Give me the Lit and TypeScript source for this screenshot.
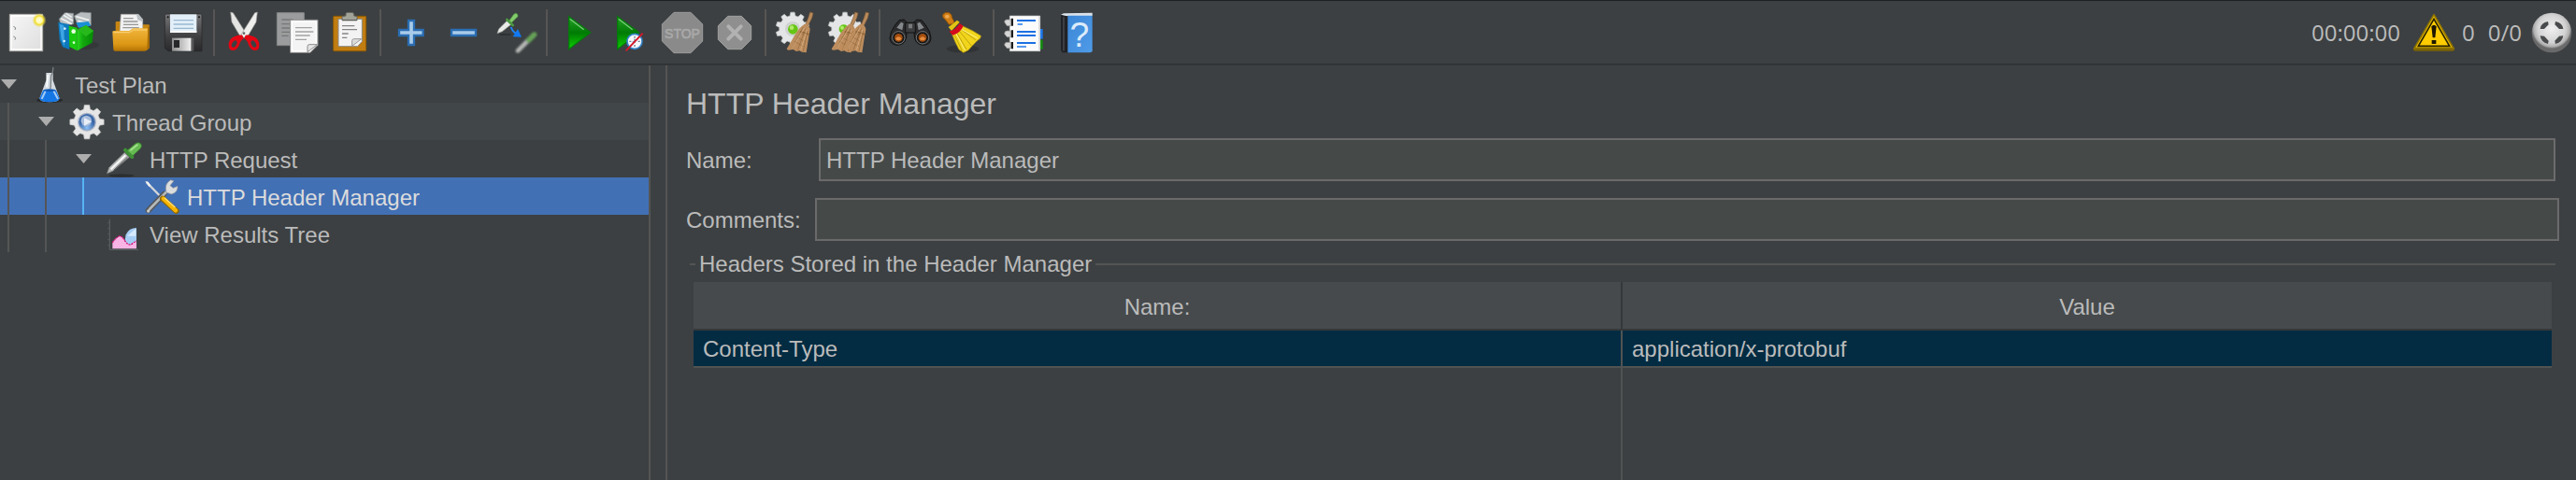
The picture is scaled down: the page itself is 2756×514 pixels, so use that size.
import { LitElement, html, svg, css, nothing, TemplateResult } from "lit";
import { customElement, property, state } from "lit/decorators.js";
import { classMap } from "lit/directives/class-map.js";

interface Icon {
  box: string;
  art: TemplateResult;
}

const gearPath = (cx: number, cy: number, outer: number, inner: number, teeth: number): string => {
  const points: string[] = [];
  const step = (Math.PI * 2) / teeth;
  for (let i = 0; i < teeth; i++) {
    const mid = i * step - Math.PI / 2;
    const at = (r: number, a: number) => `${(cx + r * Math.cos(a)).toFixed(1)},${(cy + r * Math.sin(a)).toFixed(1)}`;
    points.push(at(inner, mid - step * 0.32), at(outer, mid - step * 0.19), at(outer, mid + step * 0.19), at(inner, mid + step * 0.32));
  }
  return `M${points.join("L")}Z`;
};

const broom = (dx: number) => svg`
  <g transform="translate(${dx} 0)">
    <path d="M200 36l10 3-4 16-14 28-8-4 10-24z" fill="#b98a5c" stroke="#7d5a38" stroke-width="2"/>
    <path d="M182 74c10 0 18 8 18 18l-4 22-8 52-14-2-8-4-10 2-10-6-16 2c-4-2-6-4-4-6 16-22 26-50 44-68z" fill="#bd8d5e"/>
    <path d="M178 84l-34 66M186 88l-26 70M192 96l-14 66M166 100l16 12M158 116l24 14M150 130l28 16" stroke="#8f683d" stroke-width="2" fill="none"/>
    <path d="M168 98l30 10" stroke="#8f6538" stroke-width="4"/>
    <path d="M182 86l-38 64M190 92l-20 66" stroke="#dfb689" stroke-width="2" fill="none"/>
  </g>`;

const ICONS: Record<string, Icon> = {
  new: {
    box: "0 18 168 168",
    art: svg`
      <defs><linearGradient id="a" x1="0" y1="0" x2="1" y2="1"><stop offset="0" stop-color="#f7f7f7"/><stop offset="1" stop-color="#dedede"/></linearGradient>
      <radialGradient id="b"><stop offset="0" stop-color="#fffde8"/><stop offset=".45" stop-color="#fff9a0"/><stop offset=".6" stop-color="#f2dc2c"/><stop offset="1" stop-color="#e8d84c" stop-opacity="0"/></radialGradient></defs>
      <path d="M31 43H137V161H31Z" fill="url(#a)" stroke="#b4b4b0" stroke-width="3"/>
      <path d="M36 48H132V156H36Z" fill="none" stroke="#fff" stroke-width="4"/>
      <path d="M43 82l7 4-2 7M43 114l7 4-2 7" stroke="#888" stroke-width="3" fill="none"/>
      <circle cx="126" cy="62" r="23" fill="url(#b)"/>`,
  },
  templates: {
    box: "168 18 168 168",
    art: svg`
      <defs><linearGradient id="a"><stop offset="0" stop-color="#27d61c"/><stop offset=".35" stop-color="#12a80e"/><stop offset="1" stop-color="#058a04"/></linearGradient></defs>
      <ellipse cx="262" cy="142" rx="56" ry="14" fill="#2c2f30" opacity=".5"/>
      <path d="M190 58l18-20 28 2v34l-40 6zM238 48l22-12 32 2v40l-40 6z" fill="#b8bec0" stroke="#7e8688" stroke-width="2"/>
      <path d="M196 56l34 18M204 46l30 18M244 50l42 12M250 64l38 10M212 40l18 12" stroke="#eef0f0" stroke-width="5"/>
      <path d="M187 68l36 8v80l-22-8-10-24z" fill="#0e78bd"/>
      <path d="M191 74l14 4 2 68-10-22z" fill="#3fa5e2"/>
      <path d="M244 70l40-4 8 14-40 6z" fill="#1b8fd6"/>
      <path d="M221 80l27 6v74l-25-12z" fill="#19c90f"/>
      <path d="M248 92l28-14 24 18-4 38-48 26z" fill="url(#a)"/>
      <path d="M248 92l28-14 24 18-24 18z" fill="#27b91c"/>
      <circle cx="236" cy="98" r="7" fill="#e6ffe0"/><circle cx="237" cy="134" r="4" fill="#d6ffd0"/>
      <circle cx="208" cy="89" r="4" fill="#d8f0ff"/><circle cx="206" cy="129" r="4" fill="#d8f0ff"/>`,
  },
  open: {
    box: "336 18 168 168",
    art: svg`
      <defs><linearGradient id="a" x1="0" y1="0" x2="0" y2="1"><stop offset="0" stop-color="#f0b63d"/><stop offset=".7" stop-color="#dc9715"/><stop offset="1" stop-color="#b47404"/></linearGradient></defs>
      <path d="M371 70q0-4 4-4h20l8 10h72q5 0 5 4v70l-8 8H371z" fill="#c88610"/>
      <path d="M388 43h56l14 16v46h-74z" fill="#f1f1f1" stroke="#a9a9a9" stroke-width="2"/>
      <path d="M438 43l6 0 14 16v8l-16-6z" fill="#b9bfc2"/>
      <path d="M396 56h32M396 66h46M396 76h48M394 86h52" stroke="#979797" stroke-width="4"/>
      <path d="M361 100q0-4 4-4h50l12-8h44q4 0 4 4l-2 62q-2 7-8 7H370q-6 0-6-6z" fill="url(#a)"/>
      <path d="M364 101h52l12-8h44" stroke="#fbd57e" stroke-width="3" fill="none"/>
      <path d="M475 82l5 0v66l-8 10z" fill="#a76c05"/>`,
  },
  save: {
    box: "504 18 168 168",
    art: svg`
      <defs><linearGradient id="a" x1="0" y1="0" x2="0" y2="1"><stop offset="0" stop-color="#77777a"/><stop offset=".6" stop-color="#3f3f42"/><stop offset="1" stop-color="#29292b"/></linearGradient>
      <linearGradient id="b"><stop offset="0" stop-color="#8e8e8e"/><stop offset="1" stop-color="#f2f2f2"/></linearGradient></defs>
      <path d="M533 42H644L648 46V161H540L529 152V46Z" fill="url(#a)" stroke="#242426" stroke-width="2"/>
      <path d="M546 43H631V101H546Z" fill="#e3eff8"/>
      <path d="M546 96H631V102H546Z" fill="#fff"/>
      <path d="M557 62H621M557 75H621M557 88H621" stroke="#98b9d2" stroke-width="4"/>
      <path d="M552 119H614V161H552Z" fill="url(#b)"/>
      <path d="M558 126H576V150H558Z" fill="#27272a"/>
      <path d="M614 119H622V161H614Z" fill="#58585a"/>
      <circle cx="539" cy="52" r="3" fill="#111"/><circle cx="639" cy="52" r="3" fill="#111"/>`,
  },
  cut: {
    box: "702 18 168 168",
    art: svg`
      <path d="M740 36l8 2 20 32 24 38-8 10-14-6-26-44z" fill="#e4e4e2" stroke="#9a9a98" stroke-width="2"/>
      <path d="M826 36l-8 2-20 32-24 38 8 10 14-6 26-44z" fill="#efefed" stroke="#9a9a98" stroke-width="2"/>
      <circle cx="783" cy="104" r="4" fill="#666"/>
      <path d="M778 110c-8-2-16 0-24 4-14 4-20 16-20 28 0 12 5 17 12 17 12 0 18-8 22-18 2-8 6-14 14-20z" fill="#e30613"/>
      <path d="M788 110c8-2 16 0 24 4 14 4 20 16 20 28 0 12-5 17-12 17-12 0-18-8-22-18-2-8-6-14-14-20z" fill="#e30613"/>
      <ellipse cx="752" cy="138" rx="7" ry="12" transform="rotate(30 752 138)" fill="#3c4042"/>
      <ellipse cx="814" cy="138" rx="7" ry="12" transform="rotate(-30 814 138)" fill="#3c4042"/>`,
  },
  copy: {
    box: "870 18 168 168",
    art: svg`
      <path d="M889 38H976V143H889Z" fill="#9b9c9d" stroke="#858687" stroke-width="3"/>
      <path d="M904 60H940M904 74H930M904 87H930M904 100H930M904 112H926" stroke="#777" stroke-width="4"/>
      <path d="M932 61H1020V142L996 166H932Z" fill="#f4f4f4" stroke="#8e8e8e" stroke-width="3"/>
      <path d="M937 66H1015V140L992 161H937Z" fill="none" stroke="#fff" stroke-width="4"/>
      <path d="M987 164V146Q987 140 993 140H1018Z" fill="#e5e5e5" stroke="#8b8b8b" stroke-width="3"/>
      <path d="M948 86H1001M948 99H1006M948 111H995M948 124H984" stroke="#a2a2a2" stroke-width="4"/>`,
  },
  paste: {
    box: "1038 18 168 168",
    art: svg`
      <rect x="1070" y="49" width="105" height="112" rx="3" fill="#c17d11" stroke="#8f5902" stroke-width="3"/>
      <path d="M1086 58H1162V130L1148 146H1086Z" fill="#f3f3f3" stroke="#8a8a85" stroke-width="3"/>
      <path d="M1130 145V128Q1130 122 1136 122H1160Z" fill="#dcdcdc" stroke="#999" stroke-width="3"/>
      <path d="M1098 80H1138M1098 92H1146M1098 105H1118M1098 118H1114" stroke="#858585" stroke-width="4"/>
      <path d="M1098 62V50L1110 48V40Q1112 37 1122 37 1134 37 1136 41V48L1146 50V62Z" fill="#a2a399" stroke="#66675f" stroke-width="3"/>
      <path d="M1098 62H1146" stroke="#5c5d56" stroke-width="3"/>`,
  },
  plus: {
    box: "36 18 168 168",
    art: svg`<path d="M111 63H129V93H158V111H129V141H111V111H81V93H111Z" fill="#a9cbe9" stroke="#2a6db3" stroke-width="7"/>`,
  },
  minus: {
    box: "204 18 168 168",
    art: svg`<path d="M249 93H327V111H249Z" fill="#a9cbe9" stroke="#2a6db3" stroke-width="7"/>`,
  },
  toggle: {
    box: "372 18 168 168",
    art: svg`
      <defs><filter id="a" x="-20%" y="-20%" width="140%" height="140%"><feGaussianBlur stdDeviation="2.5"/></filter></defs>
      <path d="M396 104L401 90 429 62 442 74 412 98Z" fill="#e9ebe9" stroke="#9c9f9c" stroke-width="2"/>
      <path d="M404 108H440" stroke="#232526" stroke-width="3"/>
      <path d="M427 60L446 78" stroke="#4d9a41" stroke-width="8" stroke-linecap="round"/>
      <path d="M434 64L448 44Q456 36 461 43 465 50 458 54L442 70Z" fill="#83cc6b" stroke="#468c38" stroke-width="2"/>
      <path d="M440 84q6 16 16 20" stroke="#1f84f5" stroke-width="6" fill="none"/>
      <path d="M446 115l28 1-12-26z" fill="#1279f2"/>
      <g filter="url(#a)"><path d="M462 160L496 126" stroke="#b5b7b5" stroke-width="14" stroke-linecap="round"/>
      <path d="M497 126L515 108" stroke="#66a356" stroke-width="16" stroke-linecap="round"/></g>`,
  },
  start: {
    box: "570 18 168 168",
    art: svg`
      <defs><linearGradient id="a" x1="0" y1="0" x2="0" y2="1"><stop offset="0" stop-color="#26a326"/><stop offset=".5" stop-color="#007a04"/><stop offset="1" stop-color="#0ed400"/></linearGradient></defs>
      <path d="M626 50L695 101 626 155Z" fill="url(#a)" stroke="#047a0a" stroke-width="4"/>
      <path d="M629 58L674 92" stroke="#79c979" stroke-width="4"/>`,
  },
  startNoPause: {
    box: "738 18 168 168",
    art: svg`
      <defs><linearGradient id="a" x1="0" y1="0" x2="0" y2="1"><stop offset="0" stop-color="#26a326"/><stop offset=".5" stop-color="#007a04"/><stop offset="1" stop-color="#0ed400"/></linearGradient></defs>
      <path d="M782 50L851 101 782 155Z" fill="url(#a)" stroke="#047a0a" stroke-width="4"/>
      <path d="M785 58L830 92" stroke="#79c979" stroke-width="4"/>
      <circle cx="837" cy="130" r="24" fill="#f4f8fc" stroke="#3584c8" stroke-width="5"/>
      <path d="M837 113V119M837 141V147M820 130H826M848 130H854M837 122V132H830" stroke="#6b7c8a" stroke-width="4" fill="none"/>
      <path d="M809 160L863 104" stroke="#d5182a" stroke-width="6"/>`,
  },
  stop: {
    box: "906 18 168 168",
    art: svg`
      <path d="M963 37H1017L1055 75V129L1017 167H963L925 129V75Z" fill="#8a8a8a" stroke="#9c9c9c" stroke-width="3"/>
      <text x="990" y="121" text-anchor="middle" font-family="Liberation Sans, sans-serif" font-size="42" fill="#a9a9a9" stroke="#a9a9a9" stroke-width="2">STOP</text>`,
  },
  shutdown: {
    box: "1074 18 168 168",
    art: svg`
      <path d="M1136 49H1180L1211 80V124L1180 155H1136L1105 124V80Z" fill="#8f8f8f" stroke="#a0a0a0" stroke-width="3"/>
      <path d="M1138 82L1178 122M1178 82L1138 122" stroke="#b2b2b2" stroke-width="12" stroke-linecap="round"/>`,
  },
  clear: {
    box: "72 18 168 168",
    art: svg`
      <path d="${gearPath(144, 90, 54, 43, 10)}" fill="#e4e5e6" stroke="#c4c5c6" stroke-width="2"/>
      <circle cx="144" cy="90" r="24" fill="#d0d2d2"/>
      <circle cx="145" cy="91" r="16" fill="#67c515"/><circle cx="141" cy="86" r="7" fill="#b0ea6a"/>
      ${broom(0)}`,
  },
  clearAll: {
    box: "240 18 168 168",
    art: svg`
      <path d="${gearPath(312, 90, 54, 43, 10)}" fill="#e4e5e6" stroke="#c4c5c6" stroke-width="2"/>
      <circle cx="308" cy="91" r="15" fill="#67c515"/><circle cx="303" cy="86" r="6" fill="#b0ea6a"/>
      ${broom(144)}${broom(179)}`,
  },
  find: {
    box: "438 18 168 168",
    art: svg`
      <path d="M474 76l12-14 16-2 8 8v36q0 36-28 38-24 0-26-22 0-20 18-44zM570 76l-12-14-16-2-8 8v36q0 36 28 38 24 0 26-22 0-20-18-44z" fill="#2b2b2d" stroke="#111" stroke-width="3"/>
      <path d="M506 70h32v32h-32z" fill="#3b3c3e" stroke="#111" stroke-width="3"/>
      <path d="M516 74h12v14h-12z" fill="#77797b"/>
      <path d="M478 86l14-18 8 4-4 22zM566 86l-14-18-8 4 4 22z" fill="#85888b"/>
      <circle cx="484" cy="118" r="20" fill="#161616" stroke="#77797b" stroke-width="3"/><circle cx="561" cy="118" r="20" fill="#161616" stroke="#77797b" stroke-width="3"/>
      <circle cx="484" cy="118" r="13" fill="#a24d10"/><circle cx="561" cy="118" r="13" fill="#a24d10"/>
      <path d="M474 122q10-14 20 0-10 10-20 0M551 122q10-14 20 0-10 10-20 0" fill="#e58a3c"/>`,
  },
  brush: {
    box: "606 18 168 168",
    art: svg`
      <ellipse cx="690" cy="154" rx="52" ry="12" fill="#2a2c2d" opacity=".6"/>
      <path d="M626 44q8-10 20-6 10 4 10 16l6 12q2 6-6 8l-10 2-12-16q-10-6-8-16z" fill="#cf7d15" stroke="#8e510a" stroke-width="3"/>
      <ellipse cx="640" cy="50" rx="7" ry="6" fill="#eda950"/>
      <path d="M644 84l28-22 8 6-26 28z" fill="#e2c213"/>
      <path d="M656 108l32-28q34 14 60 32 2 8-12 16-14 14-28 30l-16 8-14-10q-12-22-22-48z" fill="#f0d51c" stroke="#b79a0a" stroke-width="2"/>
      <path d="M664 110l24 50M672 104l30 52M680 98l38 46M686 92l46 34" stroke="#c3a50a" stroke-width="3"/>
      <path d="M668 104l30 56M684 90l54 30" stroke="#fff28a" stroke-width="3"/>
      <path d="M646 98q20-4 34-26l12 8q-10 24-34 30z" fill="#d40b1c"/>`,
  },
  list: {
    box: "804 18 168 168",
    art: svg`
      <path d="M930 90H947V122H930Z" fill="#1d78ee"/><path d="M930 125H947V155H930Z" fill="#128d0d"/>
      <path d="M841 48H938V161H841Z" fill="#fbfbfb" stroke="#c9c9c9" stroke-width="2"/>
      <path d="M936 48V161" stroke="#d8d8d8" stroke-width="5"/>
      <path d="M845 56H852V80H845ZM845 94H852V118H845ZM845 132H852V154H845Z" fill="#1b1b1b"/>
      <path d="M824 68Q824 60 832 60H844V80H832ZM824 106Q824 96 832 96H844V116H832ZM824 142Q824 133 832 133H844V152H832Z" fill="#d6d6d6" stroke="#8c8c8c" stroke-width="2"/>
      <path d="M864 63H924M864 99H924M864 111H924M864 135H924" stroke="#1c70e4" stroke-width="6"/>
      <path d="M866 75H882M864 147H894" stroke="#2379ea" stroke-width="5"/>`,
  },
  help: {
    box: "972 18 168 168",
    art: svg`
      <defs><linearGradient id="a" x1="0" y1="0" x2="1" y2="1"><stop offset="0" stop-color="#3c86d6"/><stop offset="1" stop-color="#4f9be8"/></linearGradient></defs>
      <path d="M1005 44L1014 40 1106 38V48H1010Z" fill="#d9e2ea"/>
      <path d="M1005 44L1030 50V166H1010L1005 158Z" fill="#202226"/>
      <path d="M1014 52V160" stroke="#4c4f54" stroke-width="4"/>
      <path d="M1027 47H1106V163L1098 166H1027Z" fill="url(#a)"/>
      <text x="1065" y="147" text-anchor="middle" font-family="Liberation Sans, sans-serif" font-size="112" fill="#dcebfa">?</text>`,
  },
  warning: {
    box: "426 36 132 132",
    art: svg`
      <path d="M426 150H558V158L552 161H432L426 158Z" fill="#7c6206"/>
      <path d="M492 44L555 152H429Z" fill="#edc000" stroke="#8f7400" stroke-width="5" stroke-linejoin="round"/>
      <path d="M492 58L542 145H442Z" fill="#ffcc00" stroke="#2a2300" stroke-width="5"/>
      <path d="M484 82Q492 72 500 82L496 118H488ZM485 126H499V138H485Z" fill="#1c1800"/>`,
  },
  remote: {
    box: "804 36 132 132",
    art: svg`
      <defs><radialGradient id="a" cy=".4"><stop offset="0" stop-color="#f0f0f0"/><stop offset=".7" stop-color="#d2d2d2"/><stop offset=".9" stop-color="#b0b0b0"/><stop offset="1" stop-color="#6a6a6a"/></radialGradient></defs>
      <circle cx="870" cy="102" r="64" fill="url(#a)"/>
      <path d="M833 90Q835 70 858 66L860 76 846 90ZM907 90Q905 70 882 66L880 76 894 90ZM833 112Q835 132 858 138L860 128 846 113ZM907 112Q905 132 882 138L880 128 894 113Z" fill="#484a4b"/>`,
  },
  flask: {
    box: "99 12 120 120",
    art: svg`
      <ellipse cx="159" cy="124" rx="42" ry="8" fill="#1e2021" opacity=".7"/>
      <path d="M148 36H170V60L191 118Q190 130 159 130 128 130 127 118L148 60Z" fill="#d3dae0"/>
      <path d="M138 92H180L191 118Q190 130 159 130 128 130 127 118Z" fill="#1577e6"/>
      <path d="M146 94L134 120M172 94L186 120" stroke="#a4c9f5" stroke-width="6"/>
      <path d="M154 42L150 82" stroke="#fff" stroke-width="5"/>
      <path d="M170 18Q172 28 164 46L162 88" stroke="#7b7f82" stroke-width="4" fill="none"/>
      <ellipse cx="159" cy="92" rx="20" ry="4" fill="#0d58b8"/>`,
  },
  threads: {
    box: "219 132 120 120",
    art: svg`
      <defs><radialGradient id="a" cx=".5" cy=".85"><stop offset="0" stop-color="#8fc0f5"/><stop offset="1" stop-color="#3b68a8"/></radialGradient></defs>
      <path d="${gearPath(279, 194, 55, 42, 8)}" fill="#e6e6e6" stroke="#c6c6c6" stroke-width="2"/>
      <circle cx="279" cy="194" r="30" fill="#a9b4c6"/>
      <circle cx="279" cy="194" r="26" fill="url(#a)"/>
      <circle cx="277" cy="190" r="17" fill="#a8bedc"/>
      <path d="M270 180L294 193 270 206Z" fill="#e9eef6"/>`,
  },
  dropper: {
    box: "339 252 120 120",
    art: svg`
      <ellipse cx="390" cy="366" rx="40" ry="5" fill="#222425" opacity=".6"/>
      <path d="M343 360L350 340 400 292 415 307 362 352Z" fill="#b9bcba" stroke="#6d706e" stroke-width="2"/>
      <path d="M356 346L403 301" stroke="#f8f8f8" stroke-width="6"/>
      <path d="M366 348L410 306" stroke="#5a5d5b" stroke-width="3"/>
      <path d="M402 284L424 306" stroke="#3f9135" stroke-width="12" stroke-linecap="round"/>
      <path d="M408 286L434 264Q444 256 452 264 457 272 450 280L426 302Z" fill="#66bb52" stroke="#37802c" stroke-width="2"/>
      <path d="M420 284L440 268" stroke="#a3de8c" stroke-width="6" stroke-linecap="round"/>`,
  },
  tools: {
    box: "459 372 120 120",
    art: svg`
      <path d="M470 387L514 432" stroke="#d5d7d8" stroke-width="7"/>
      <path d="M466 384L476 386 484 398 478 402Z" fill="#f0f0f0"/>
      <path d="M476 478L526 426" stroke="#55585a" stroke-width="18" stroke-linecap="round"/>
      <path d="M480 474L546 406" stroke="#b6b9bb" stroke-width="8" stroke-linecap="round"/>
      <path d="M534 420Q526 392 548 380L558 383 546 398 556 406 570 400Q572 420 550 426Z" fill="#dadcdd" stroke="#8d9092" stroke-width="2"/>
      <circle cx="476" cy="480" r="5" fill="#c9cbcc"/>
      <path d="M522 440L566 480" stroke="#8d6700" stroke-width="18" stroke-linecap="round"/>
      <path d="M524 440L564 478" stroke="#f7b500" stroke-width="13" stroke-linecap="round"/>
      <path d="M528 438L562 468" stroke="#ffe07a" stroke-width="4"/>`,
  },
  results: {
    box: "339 492 120 120",
    art: svg`
      <path d="M352 506V604H444" stroke="#606365" stroke-width="3" fill="none"/>
      <path d="M346 518H352M346 536H352M346 554H352M346 572H352M346 590H352" stroke="#585b5d" stroke-width="3"/>
      <path d="M400 580L404 556Q414 534 438 534V592L412 592Z" fill="#a5cdf4"/>
      <path d="M408 560L436 536V560Z" fill="#d6eafc"/>
      <path d="M361 601V580Q370 566 384 560 394 562 400 574 410 590 420 588 430 580 438 576V601Z" fill="#f9b3e4"/>
      <path d="M361 582Q370 566 384 560 394 562 400 574 410 590 420 588 430 580 438 576" fill="none" stroke="#d3167c" stroke-width="4" stroke-dasharray="6 3"/>`,
  },
};

@customElement("jm-icon")
export class JmIcon extends LitElement {
  static styles = css`
    :host { display: block; flex: none; }
    .art { display: block; width: 100%; height: 100%; }
  `;
  @property() name = "";

  render() {
    const icon = ICONS[this.name];
    return icon ? html`<svg class="art" viewBox=${icon.box} aria-hidden="true">${icon.art}</svg>` : nothing;
  }
}

const TOOL_GROUPS: [string, string, boolean?][][] = [
  [["new", "New"], ["templates", "Templates"], ["open", "Open"], ["save", "Save"]],
  [["cut", "Cut"], ["copy", "Copy"], ["paste", "Paste"]],
  [["plus", "Expand All"], ["minus", "Collapse All"], ["toggle", "Toggle"]],
  [["start", "Start"], ["startNoPause", "Start no pauses"], ["stop", "Stop", true], ["shutdown", "Shutdown", true]],
  [["clear", "Clear"], ["clearAll", "Clear All"]],
  [["find", "Search"], ["brush", "Reset Search"]],
  [["list", "Function Helper"], ["help", "Help"]],
];

@customElement("jm-toolbar")
export class JmToolbar extends LitElement {
  static styles = css`
    :host {
      display: flex;
      align-items: center;
      box-sizing: border-box;
      min-height: 70px;
      border-top: 1px solid #1d2023;
      border-bottom: 2px solid #313437;
    }
    .tools, .group, .status { display: flex; align-items: center; }
    .group + .group::before {
      content: "";
      width: 2px;
      height: 50px;
      margin: 0 4px;
      background: #575554;
    }
    .tool, .alert { padding: 0; border: 0; background: none; }
    .tool jm-icon { width: 56px; height: 56px; }
    .status {
      gap: 14px;
      margin-left: auto;
      padding-right: 4px;
      font: 24px/32px "Open Sans", sans-serif;
    }
    .errors { display: flex; align-items: center; gap: 8px; }
    .threads { display: flex; align-items: center; gap: 10px; }
    .status jm-icon { width: 44px; height: 44px; }
  `;

  render() {
    return html`
      <div class="tools" role="toolbar">
        ${TOOL_GROUPS.map((group) => html`<div class="group">
          ${group.map(([icon, label, off]) => html`<button class="tool" aria-label=${label} ?disabled=${off}><jm-icon name=${icon}></jm-icon></button>`)}
        </div>`)}
      </div>
      <div class="status">
        <span>00:00:00</span>
        <div class="errors">
          <button class="alert" aria-label="Log errors"><jm-icon name="warning"></jm-icon></button>
          <span>0</span>
        </div>
        <div class="threads"><span>0/0</span><jm-icon name="remote"></jm-icon></div>
      </div>`;
  }
}

interface TreeNode {
  label: string;
  icon: string;
  depth: number;
  open?: boolean;
}

const NODES: TreeNode[] = [
  { label: "Test Plan", icon: "flask", depth: 0, open: true },
  { label: "Thread Group", icon: "threads", depth: 1, open: true },
  { label: "HTTP Request", icon: "dropper", depth: 2, open: true },
  { label: "HTTP Header Manager", icon: "tools", depth: 3 },
  { label: "View Results Tree", icon: "results", depth: 2 },
];

@customElement("jm-tree")
export class JmTree extends LitElement {
  static styles = css`
    :host { display: block; }
    .row { display: flex; align-items: center; height: 40px; white-space: nowrap; }
    .row.striped { background: #414648; }
    .row.selected { background: #4270b5; color: #dcdcdc; }
    .guide {
      box-sizing: border-box;
      flex: none;
      width: 40px;
      height: 40px;
      padding-left: 8px;
    }
    .guide::before { content: ""; display: block; width: 2px; height: 40px; background: #555555; }
    .selected .guide:nth-child(3)::before { background: #56b4f2; }
    .twisty { box-sizing: border-box; flex: none; display: block; width: 33px; height: 40px; padding: 0; border: 0; background: none; }
    .arrow { display: block; width: 17px; height: 10px; margin-left: 1px; }
    .row jm-icon { width: 40px; height: 40px; margin-right: 7px; }
    .label { padding-top: 4px; }
  `;
  @state() private selected = 3;

  render() {
    return html`<div role="tree" aria-label="Test plan elements">
      ${NODES.map((node, i) => html`
        <div class=${classMap({ row: true, striped: i === 1, selected: i === this.selected })}
          role="treeitem" aria-level=${node.depth + 1} aria-selected=${i === this.selected ? "true" : "false"}
          @click=${() => (this.selected = i)}>
          ${Array.from({ length: node.depth }, () => html`<span class="guide"></span>`)}
          ${node.open
            ? html`<button class="twisty" aria-label="Collapse ${node.label}"><svg class="arrow" viewBox="0 0 17 10"><path d="M0 0H17L8.5 10Z" fill="#adadad"/></svg></button>`
            : html`<span class="twisty"></span>`}
          <jm-icon name=${node.icon}></jm-icon>
          <span class="label">${node.label}</span>
        </div>`)}
    </div>`;
  }
}

@customElement("jm-header-manager")
export class JmHeaderManager extends LitElement {
  static styles = css`
    :host { display: flex; flex-direction: column; box-sizing: border-box; padding: 21px 18px 0 20px; }
    .title { margin: 0 0 17px; font-size: 32px; line-height: 40px; font-weight: 400; }
    .field { display: flex; align-items: center; margin-bottom: 18px; }
    .field.inset { padding-right: 4px; }
    .label { box-sizing: border-box; flex: none; width: 138px; padding-top: 2px; }
    .inset .label { width: 142px; }
    .input {
      flex: 1;
      min-width: 0;
      box-sizing: border-box;
      height: 46px;
      padding: 2px 6px 0;
      border: 2px solid #6b6a6b;
      border-radius: 0;
      background: #454a49;
      color: inherit;
      font: inherit;
      outline: none;
    }
    .headers {
      flex: 1;
      display: flex;
      flex-direction: column;
      min-width: 0;
      margin: -7px 4px 0;
      padding: 5px 4px 0;
      border: 0;
      border-top: 2px solid #555454;
    }
    .legend { margin-left: 2px; padding: 0 4px; line-height: 28px; }
    .table { width: 100%; border-collapse: separate; border-spacing: 0; table-layout: fixed; }
    .head, .cell { box-sizing: border-box; padding: 2px 10px 0; font-weight: 400; }
    .head { height: 52px; padding-top: 4px; background: #464a4c; border-bottom: 2px solid #35383a; }
    .head:first-child { border-right: 2px solid #35383a; }
    .cell { height: 40px; background: #032c42; border-bottom: 2px solid #515352; text-align: left; }
    .cell:first-child { border-right: 2px solid #515352; }
    .rest { flex: 1; display: grid; grid-template-columns: 1fr 1fr; }
    .rest-name { border-right: 2px solid #515352; }
  `;

  render() {
    return html`
      <h1 class="title">HTTP Header Manager</h1>
      <div class="field inset">
        <label class="label" for="name">Name:</label>
        <input class="input" id="name" type="text" .value=${"HTTP Header Manager"} />
      </div>
      <div class="field">
        <label class="label" for="comments">Comments:</label>
        <input class="input" id="comments" type="text" />
      </div>
      <fieldset class="headers">
        <legend class="legend">Headers Stored in the Header Manager</legend>
        <table class="table">
          <thead><tr><th class="head" scope="col">Name:</th><th class="head" scope="col">Value</th></tr></thead>
          <tbody><tr><td class="cell">Content-Type</td><td class="cell">application/x-protobuf</td></tr></tbody>
        </table>
        <div class="rest"><div class="rest-name"></div></div>
      </fieldset>`;
  }
}

@customElement("app-root")
export class AppRoot extends LitElement {
  static styles = css`
    :host {
      display: flex;
      flex-direction: column;
      min-height: 100vh;
      background: #3c4042;
      color: #bbbbbb;
      font: 24px/28px "Liberation Sans", Arial, sans-serif;
    }
    .main { flex: 1; display: grid; grid-template-columns: 694px 20px minmax(0, 1fr); }
    .divider { box-sizing: border-box; border: solid #555453; border-width: 0 2px; }
  `;

  render() {
    return html`
      <jm-toolbar></jm-toolbar>
      <div class="main">
        <jm-tree></jm-tree>
        <div class="divider"></div>
        <jm-header-manager></jm-header-manager>
      </div>`;
  }
}
